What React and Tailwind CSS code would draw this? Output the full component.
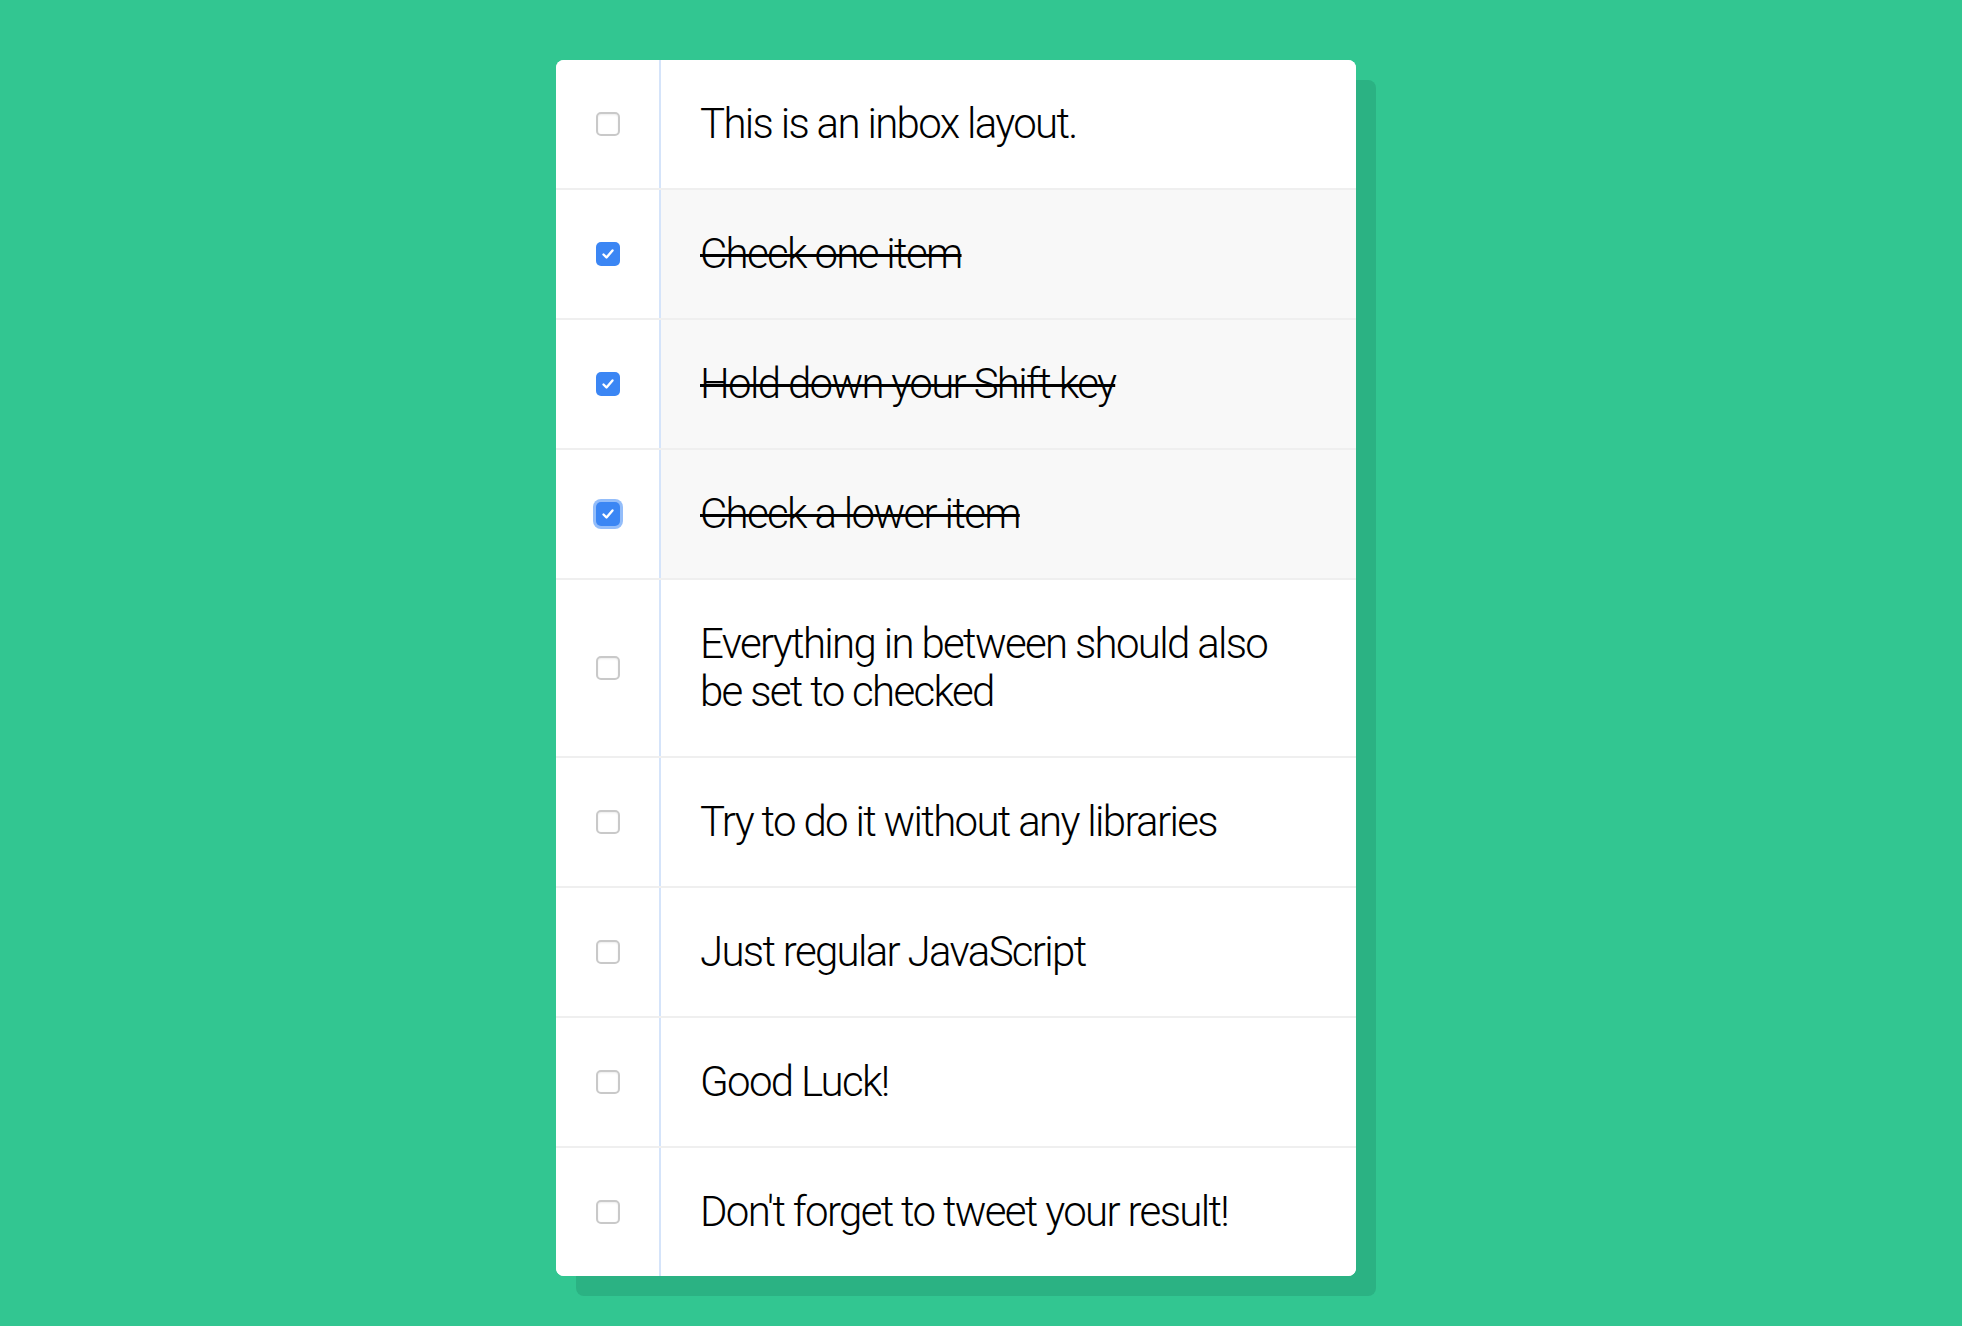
import React, { useState } from 'react';

const initialItems = [
  { text: 'This is an inbox layout.', checked: false },
  { text: 'Check one item', checked: true },
  { text: 'Hold down your Shift key', checked: true },
  { text: 'Check a lower item', checked: true, focused: true },
  { text: 'Everything in between should also be set to checked', checked: false },
  { text: 'Try to do it without any libraries', checked: false },
  { text: 'Just regular JavaScript', checked: false },
  { text: 'Good Luck!', checked: false },
  { text: "Don't forget to tweet your result!", checked: false },
];

function Box({ checked, focused, onClick }) {
  if (checked) {
    return (
      <button
        onClick={onClick}
        className={`w-6 h-6 rounded-[5px] bg-[#3b86f4] flex items-center justify-center ${focused ? 'ring-[3px] ring-[#93bdfa]' : ''}`}
      >
        <svg width="16" height="16" viewBox="0 0 16 16" fill="none">
          <path d="M3.5 8.5l3 3 6-7" stroke="white" strokeWidth="2.4" strokeLinecap="round" strokeLinejoin="round" />
        </svg>
      </button>
    );
  }
  return (
    <button
      onClick={onClick}
      className="w-6 h-6 rounded-[5px] bg-white border-2 border-[#c9c9c9] shadow-[inset_0_1px_2px_rgba(0,0,0,0.08)]"
    />
  );
}

export default function App() {
  const [items, setItems] = useState(initialItems);

  const toggle = (i) => {
    setItems(items.map((it, idx) => (idx === i ? { ...it, checked: !it.checked } : it)));
  };

  return (
    <div className="min-h-screen bg-[#32c691] pt-[60px] pb-[60px] font-['Roboto','Liberation_Sans',sans-serif]">
      <div className="ml-[556px] w-[800px] bg-white rounded-[8px] overflow-hidden shadow-[20px_20px_0_#2bb283]">
        {items.map((item, i) => (
          <div
            key={i}
            className={`flex ${i < items.length - 1 ? 'border-b-2 border-[#efefef]' : ''}`}
          >
            <div className="w-[105px] shrink-0 flex items-center justify-center border-r-2 border-[#d5e4fa] bg-white">
              <Box checked={item.checked} focused={item.focused} onClick={() => toggle(i)} />
            </div>
            <div
              className={`flex-1 flex items-center pl-[39px] pr-[40px] py-[40px] text-[42px] leading-[48px] font-light tracking-[-0.04em] text-black ${
                item.checked ? 'bg-[#f8f8f8] line-through decoration-[3px]' : 'bg-white'
              }`}
            >
              {item.text}
            </div>
          </div>
        ))}
      </div>
    </div>
  );
}
